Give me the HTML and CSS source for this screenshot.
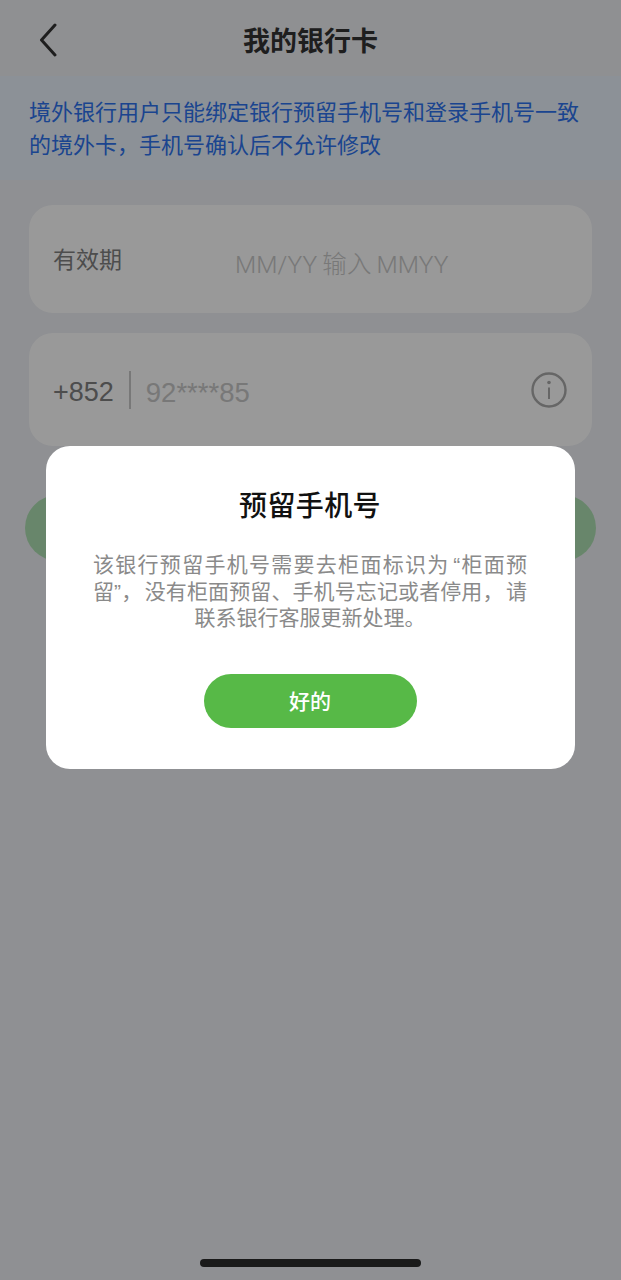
FILE: index.html
```html
<!DOCTYPE html>
<html lang="zh-CN">
<head>
    <meta charset="UTF-8">
    <meta name="viewport" content="width=device-width, initial-scale=1.0">
    <title>我的银行卡</title>
    <link rel="stylesheet" href="styles.css">
</head>
<body>
    <div class="page">
        <header class="topbar">
            <svg class="back" width="18" height="34" viewBox="0 0 18 34" fill="none">
                <path d="M16 2 L2.5 17 L16 32" stroke="#333" stroke-width="3" stroke-linecap="round" stroke-linejoin="round"/>
            </svg>
            <h1 class="title">我的银行卡</h1>
        </header>

        <p class="notice">境外银行用户只能绑定银行预留手机号和登录手机号一致的境外卡，手机号确认后不允许修改</p>

        <div class="form">
            <div class="field field-date">
                <span class="label">有效期</span>
                <span class="hint">MM/YY 输入 MMYY</span>
            </div>
            <div class="field field-phone">
                <span class="code">+852</span>
                <span class="divider"></span>
                <span class="phone">92****85</span>
                <svg class="info" width="36" height="36" viewBox="0 0 36 36" fill="none">
                    <circle cx="18" cy="18" r="16.5" stroke="#aaa" stroke-width="2.4"/>
                    <circle cx="18" cy="10.5" r="1.8" fill="#aaa"/>
                    <path d="M18 15.5 V27" stroke="#aaa" stroke-width="2"/>
                </svg>
            </div>
            <button class="submit"></button>
        </div>
    </div>

    <!-- Dialog layer -->
    <div class="overlay"></div>
    <div class="dialog">
        <h2 class="dialog-title">预留手机号</h2>
        <p class="dialog-text">该银行预留手机号需要去柜面标识为 “柜面预留”， 没有柜面预留、手机号忘记或者停用， 请联系银行客服更新处理。</p>
        <button class="dialog-btn">好的</button>
    </div>

    <div class="home-bar"></div>
</body>
</html>
```

FILE: styles.css
```css
/* Global Styles */
html, body {
    margin: 0;
    padding: 0;
}

body {
    position: relative;
    width: 621px;
    height: 1280px;
    overflow: hidden;
    background: #eef0f5;
    font-family: 'Liberation Sans', 'Noto Sans CJK SC', sans-serif;
}

/* Top Bar */
.topbar {
    position: relative;
    height: 76px;
    display: flex;
    align-items: center;
    justify-content: center;
    background: #eff0f4;
}

.back {
    position: absolute;
    left: 39px;
    top: 23px;
}

.title {
    margin: 2px 0 0;
    font-size: 27px;
    font-weight: 700;
    color: #333;
}

/* Notice */
.notice {
    margin: 0;
    height: 104px;
    box-sizing: border-box;
    padding: 20px 29px 0;
    font-size: 22px;
    line-height: 33px;
    color: #2d72ee;
    background: #e9f2fc;
}

/* Form Cards */
.form {
    padding: 25px 29px 0;
}

.field {
    display: flex;
    background: #fff;
    border-radius: 24px;
}

.field-date {
    height: 108px;
    align-items: center;
    padding-left: 24px;
    margin-bottom: 20px;
}

.label {
    width: 182px;
    margin-top: -3px;
    font-size: 23px;
    color: #808080;
}

.hint {
    padding-top: 7px;
    font-family: Roboto, 'Noto Sans CJK SC', sans-serif;
    font-size: 24.5px;
    font-weight: 300;
    word-spacing: -1px;
    letter-spacing: 0.1px;
    color: #c8c8c8;
}

.field-phone {
    height: 113px;
    align-items: center;
    padding: 0 25px 0 24px;
}

.code {
    padding-top: 5px;
    font-size: 27px;
    color: #808080;
}

.divider {
    width: 2px;
    height: 38px;
    margin: 0 15px;
    background: #c8c8c8;
}

.phone {
    flex: 1;
    padding-top: 6px;
    font-size: 27.5px;
    color: #c8c8c8;
}

.submit {
    display: block;
    width: 571px;
    height: 66px;
    margin: 49px 0 0 -4px;
    border: none;
    border-radius: 33px;
    background: #aee0b2;
}

/* Dialog */
.overlay {
    position: absolute;
    inset: 0;
    background: rgba(0, 0, 0, 0.4);
}

.dialog {
    position: absolute;
    left: 46px;
    top: 446px;
    width: 529px;
    height: 323px;
    box-sizing: border-box;
    padding: 41px 48px 0 47px;
    background: #fff;
    border-radius: 24px;
    text-align: center;
}

.dialog-title {
    margin: 0;
    font-size: 28px;
    line-height: 40px;
    font-weight: 500;
    letter-spacing: 0.4px;
    color: #111;
}

.dialog-text {
    margin: 25px 0 0;
    font-size: 21px;
    line-height: 26.5px;
    word-spacing: -3.5px;
    color: #8a8a8a;
    text-align: justify;
    text-align-last: center;
}

.dialog-btn {
    display: block;
    width: 213px;
    height: 54px;
    margin: 42px auto 0;
    padding: 0 0 2px;
    border: none;
    border-radius: 27px;
    background: #57b947;
    color: #fff;
    font-family: inherit;
    font-size: 21px;
    font-weight: 500;
}

.home-bar {
    position: absolute;
    left: 200px;
    top: 1259px;
    width: 221px;
    height: 8px;
    border-radius: 4px;
    background: #1a1a1a;
}
```
